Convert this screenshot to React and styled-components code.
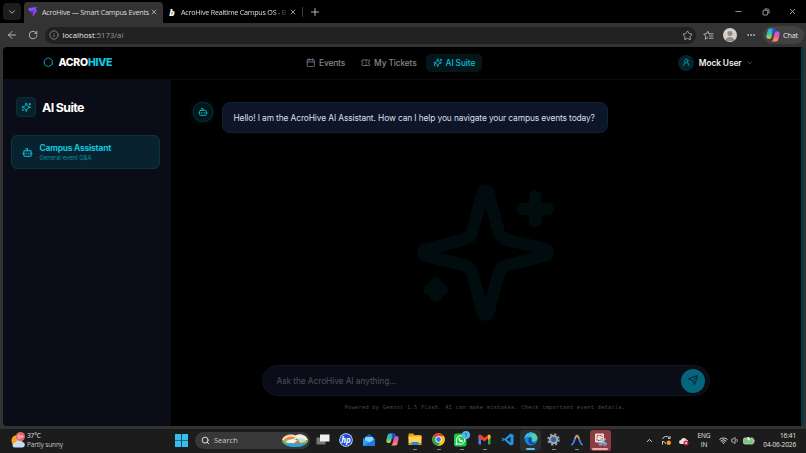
import React from 'react';
import styled, { createGlobalStyle } from 'styled-components';
import {
    ArrowLeft,
    Bot,
    Calendar,
    ChevronDown,
    ChevronUp,
    Ellipsis,
    Hexagon,
    Info,
    Minus,
    Plus,
    RotateCw,
    Search,
    Star,
    Ticket,
    UserRound,
    Volume1,
    Wifi,
    X
} from 'lucide-react';

const GlobalStyle = createGlobalStyle`
    * {
        box-sizing: border-box;
    }

    body {
        margin: 0;
        background: #000;
        overflow: hidden;
        font-family: "Open Sans", "Noto Sans", sans-serif;
    }

    svg {
        display: block;
        flex: none;
    }
`;

/* ---------- drawings ---------- */

const Sparkles = ({ size, stroke = 2 }) => (
    <svg width={size} height={size} viewBox="0 0 24 24" fill="none" stroke="currentColor" strokeWidth={stroke} strokeLinecap="round" strokeLinejoin="round">
        <path d="M9.937 15.5A2 2 0 0 0 8.5 14.063l-6.135-1.582a.5.5 0 0 1 0-.962L8.5 9.936A2 2 0 0 0 9.937 8.5l1.582-6.135a.5.5 0 0 1 .963 0L14.063 8.5A2 2 0 0 0 15.5 9.937l6.135 1.581a.5.5 0 0 1 0 .964L15.5 14.063a2 2 0 0 0-1.437 1.437l-1.582 6.135a.5.5 0 0 1-.963 0zM20 3v4M22 5h-4M4 17v2M5 18H3" />
    </svg>
);

const SendIcon = () => (
    <svg width="10.5" height="10.5" viewBox="0 0 24 24" fill="none" stroke="#032733" strokeWidth="2.2" strokeLinecap="round" strokeLinejoin="round">
        <path d="m22 2-7 20-4-9-9-4ZM22 2 11 13" />
    </svg>
);

const RestoreIcon = () => (
    <svg width="8" height="8" viewBox="0 0 16 16" fill="none" stroke="#c8c8c8" strokeWidth="1.6">
        <rect x="2" y="4.500" width="9.500" height="9.500" rx="2" />
        <path d="M5 2h6a3 3 0 0 1 3 3v6" />
    </svg>
);

const BoltLogo = () => (
    <svg width="10" height="10" viewBox="0 0 20 20">
        <path d="M1 2 18 0l-3 6h4L9 20l1-8H4l3-4H1z" fill="#8d4dff" />
        <path d="m7 8 8-2-5 6H4z" fill="#5f2be0" />
    </svg>
);

const FavoritesIcon = () => (
    <svg width="11" height="11" viewBox="0 0 22 22" fill="none" stroke="#c4c4c4" strokeWidth="1.7" strokeLinecap="round" strokeLinejoin="round">
        <path d="M12 7.500 9.500 2.500 7 7.500 1.500 8.300l4 4-1 6 5-2.800M12 7.500h8M13 12h7M13 16.500h7" />
    </svg>
);

const CopilotLogo = ({ size }) => (
    <svg width={size} height={size} viewBox="0 0 26 26">
        <defs>
            <linearGradient id="coLeft" x1="0" y1="0" x2="0" y2="1">
                <stop offset="0" stopColor="#2aa7ee" />
                <stop offset=".55" stopColor="#39c6a0" />
                <stop offset="1" stopColor="#f5c52d" />
            </linearGradient>
            <linearGradient id="coRight" x1="0" y1="0" x2="0" y2="1">
                <stop offset="0" stopColor="#a35cf0" />
                <stop offset=".55" stopColor="#f0608a" />
                <stop offset="1" stopColor="#ff9a5a" />
            </linearGradient>
        </defs>
        <path d="M8 1h8c-3 1-3 4-4 8l-2 8c-1 3-3 3-5 3-4 0-5-3-4-7l2-8c1-3 2-4 5-4z" fill="url(#coLeft)" />
        <path d="M18 25h-8c3-1 3-4 4-8l2-8c1-3 3-3 5-3 4 0 5 3 4 7l-2 8c-1 3-2 4-5 4z" fill="url(#coRight)" />
        <path d="M12 1h4c2 0 3 2 3.500 5-3 0-4 1-5 4l-1 3-2-4z" fill="#2353cc" />
    </svg>
);

const WeatherIcon = () => (
    <svg width="15" height="17" viewBox="0 0 30 34">
        <circle cx="12" cy="17" r="11" fill="#f6a21b" />
        <path d="M8 31a5 5 0 0 1 0-10 8 8 0 0 1 14-1 5.500 5.500 0 0 1 0 11z" fill="#c9dcf5" />
        <circle cx="19" cy="9" r="9" fill="#e4696a" />
        <text x="19" y="13" fontSize="11" fill="#fff" textAnchor="middle" fontFamily="Open Sans">9+</text>
    </svg>
);

const WindowsLogo = () => (
    <svg width="13" height="13" viewBox="0 0 26 26" fill="#35bdf2">
        <path d="M0 0h12.300v12.300H0zM13.700 0H26v12.300H13.700zM0 13.700h12.300V26H0zM13.700 13.700H26V26H13.700z" />
    </svg>
);

const SearchArt = () => (
    <svg width="28" height="15" viewBox="0 0 56 30">
        <ellipse cx="28" cy="16" rx="26" ry="11" fill="#5fae62" />
        <path d="M2 14C6 3 18 2 27 4l8 5-15 9z" fill="#f3dcae" />
        <path d="M5 15c6-8 14-9 23-6l-9 7z" fill="#e8845a" />
        <path d="M9 19c6-7 14-8 24-4l-8 6z" fill="#eef5e4" />
        <path d="M8 23c10-3 24-3 40-1-6 8-32 8-40 1z" fill="#2ea4d8" />
        <path d="M28 6c8-7 23-3 26 9-5-2-12-1-15 3z" fill="#f5efe2" />
        <path d="M34 12c6-3 12-1 17 5l-13 3z" fill="#ccd9cf" />
        <path d="M30 16c4 0 6 2 8 5l-9 1z" fill="#e4685a" />
    </svg>
);

const TaskViewIcon = () => (
    <svg width="14" height="13" viewBox="0 0 28 26">
        <path d="M1 9h18v14H1z" fill="#777" />
        <path d="M8 3h19v14H8z" fill="#efefef" />
    </svg>
);

const HpIcon = () => (
    <svg width="14" height="14" viewBox="0 0 28 28">
        <circle cx="14" cy="14" r="13.500" fill="#e7efff" />
        <circle cx="14" cy="14" r="12" fill="#1b50d8" />
        <text x="14" y="19" fontSize="16" fontStyle="italic" fontWeight="700" fill="#fff" textAnchor="middle" fontFamily="Open Sans">hp</text>
    </svg>
);

const MailIcon = () => (
    <svg width="14" height="14" viewBox="0 0 28 28">
        <path d="M2 11 14 2l12 9v13a2 2 0 0 1-2 2H4a2 2 0 0 1-2-2z" fill="#1166c8" />
        <path d="M7 8h14l3 7-9 5-10-4z" fill="#8fd4fa" />
        <path d="m2 12 13 7-11 7a2 2 0 0 1-2-2z" fill="#2f9df0" />
        <path d="m26 12-22 14h20a2 2 0 0 0 2-2z" fill="#1b7de0" />
    </svg>
);

const FolderIcon = () => (
    <svg width="14" height="13" viewBox="0 0 28 26">
        <path d="M1 3a2 2 0 0 1 2-2h7l3 3h12a2 2 0 0 1 2 2v6H1z" fill="#e9a317" />
        <path d="M1 7h26v14H1z" fill="#ffd257" />
        <path d="M1 21h26v3H1z" fill="#e9a317" />
        <path d="M7 18h14v6H7z" fill="#2a86dc" />
    </svg>
);

const ChromeIcon = () => (
    <svg width="13" height="13" viewBox="0 0 26 26">
        <circle cx="13" cy="13" r="12.500" fill="#f9c51d" />
        <path d="M13 13 2.200 6.700A12.500 12.500 0 0 1 23.800 6.700z" fill="#e34133" />
        <path d="M13 13 2.200 6.700A12.500 12.500 0 0 0 12.500 25.500l6-9z" fill="#2ba24c" />
        <path d="M13 6.700h10.800A12.500 12.500 0 0 1 12.500 25.500l6-9.300z" fill="#f9c51d" />
        <circle cx="13" cy="13" r="6.300" fill="#fff" />
        <circle cx="13" cy="13" r="4.800" fill="#3b78e7" />
    </svg>
);

const WhatsappIcon = () => (
    <svg width="17" height="17" viewBox="0 0 34 34">
        <rect x="2" y="5" width="25" height="26" rx="5" fill="#17c94b" />
        <path d="m6 27 1.500-5a8.500 8.500 0 1 1 3.500 3.500z" fill="none" stroke="#fff" strokeWidth="2" />
        <path d="M11 14c1-2 2-1 3 1 0 1-1 1 0 2l2 2c1 0 1-1 2-1 3 1 2 3 0 4-4 1-8-4-7-8z" fill="#fff" />
        <circle cx="26" cy="8" r="8" fill="#53b8f0" />
        <text x="26" y="12" fontSize="12" fill="#0b2637" textAnchor="middle" fontFamily="Open Sans">1</text>
    </svg>
);

const GmailIcon = () => (
    <svg width="13" height="11" viewBox="0 0 26 22">
        <path d="M1 4h5v17H3a2 2 0 0 1-2-2z" fill="#4285f4" />
        <path d="M20 4h5v15a2 2 0 0 1-2 2h-3z" fill="#34a853" />
        <path d="M1 4c0-3 3-4 5-2l7 5.500L20 2v7l-7 5.500L1 8z" fill="#ea4335" />
        <path d="M20 2c2-2 5-1 5 2v4l-5 4z" fill="#fbbc04" />
    </svg>
);

const VsCodeIcon = () => (
    <svg width="13" height="13" viewBox="0 0 26 26">
        <path d="M19 1 6.500 12 3 9.500 1 10.500 4 13l-3 2.500 2 1L6.500 14 19 25l6-2.500v-19zM19 7.500v11L11.500 13z" fill="#2196e3" fillRule="evenodd" />
    </svg>
);

const EdgeIcon = () => (
    <svg width="14" height="14" viewBox="0 0 28 28">
        <circle cx="14" cy="14" r="13" fill="#1684d8" />
        <path d="M1 13C2 5 8 1 14 1c8 0 13 6 13 11 0 4-3 7-8 7-3 0-4-1-3-3 2-4-2-7-6-7-5 0-8 2-9 4z" fill="#4fd2a8" />
        <path d="M1 13C2 5 8 1 14 1c3 0 6 1 8 3-6-1-10 1-12 5-5 0-8 2-9 4z" fill="#30b5e6" />
        <path d="M10 12c-4 6 1 13 8 13 3 0 5-1 7-3-5 1-9 0-10-4-1-2 0-3 0-5-1-2-4-3-5-1z" fill="#0b4a9c" />
    </svg>
);

const SettingsIcon = () => (
    <svg width="13" height="13" viewBox="0 0 26 26">
        <circle cx="13" cy="13" r="10.500" fill="none" stroke="#8e9daa" strokeWidth="4" strokeDasharray="4.600 3.650" />
        <circle cx="13" cy="13" r="7.500" fill="#5f6e7b" stroke="#aab6c0" strokeWidth="3" />
        <circle cx="13" cy="13" r="3.500" fill="#1d65b8" />
    </svg>
);

const ArchIcon = () => (
    <svg width="12" height="12" viewBox="0 0 24 24" fill="none" strokeWidth="3.500" strokeLinecap="round">
        <path d="M2 21c5-2 6-18 10-18" stroke="#3b86f5" />
        <path d="M12 3c4 0 5 16 10 18" stroke="#3b86f5" />
        <path d="M8.500 8c1-3 2-5 3.500-5s2.500 2 3.500 5" stroke="#f08e3c" />
    </svg>
);

const SnipIcon = () => (
    <svg width="15" height="15" viewBox="0 0 30 30">
        <rect x="4" y="3" width="18" height="18" rx="2" fill="#f0dada" />
        <path d="M8 7h10v10H8z" fill="none" stroke="#a03b3f" strokeWidth="2" strokeDasharray="3 2" />
        <path d="m15 14 10 10M25 13 15 25" stroke="#a9c3d6" strokeWidth="2.500" />
        <circle cx="24" cy="24" r="3" fill="none" stroke="#6db6e8" strokeWidth="2" />
        <circle cx="15" cy="24" r="3" fill="none" stroke="#6db6e8" strokeWidth="2" />
    </svg>
);

const SyncIcon = () => (
    <svg width="11" height="11" viewBox="0 0 22 22" fill="none" stroke="#cfcfcf" strokeWidth="2">
        <path d="M3 8a8 8 0 0 1 13-3l2 2V2M3 19v-6h3l4 5M18 7h-4" />
        <circle cx="15.500" cy="15.500" r="4.500" fill="#f59b1c" stroke="none" />
    </svg>
);

const CloudIcon = () => (
    <svg width="10" height="10" viewBox="0 0 20 20">
        <path d="M4 16a4 4 0 0 1 0-8 6 6 0 0 1 11-1 4 4 0 0 1 3 5l-3 4z" fill="#e2e2e2" />
        <circle cx="14" cy="14" r="5" fill="#d5243c" />
        <path d="m12 12 4 4M16 12l-4 4" stroke="#fff" strokeWidth="1.300" />
    </svg>
);

const BatteryIcon = () => (
    <svg width="12" height="9" viewBox="0 0 24 18">
        <rect x="1" y="4" width="20" height="12" rx="3" fill="#77c878" stroke="#d8d8d8" strokeWidth="1.500" />
        <path d="M22 7.500v5" stroke="#d8d8d8" strokeWidth="2" />
        <path d="M9 2v6h3l-2 5 5-7h-3V2z" fill="#e8f5e8" />
    </svg>
);

/* ---------- browser frame ---------- */

const Screen = styled.div`
    width: 806px;
    height: 453px;
    display: flex;
    flex-direction: column;
    background: #333;
    overflow: hidden;
    white-space: nowrap;
`;

const TabBar = styled.div`
    height: 23px;
    flex: none;
    display: flex;
    align-items: center;
    background: #000;
    padding: 0 9px 0 3px;
    color: #c8c8c8;
`;

const TabMenu = styled.div`
    width: 18px;
    height: 17px;
    margin-right: 3px;
    border-radius: 4px;
    background: #1d1d1d;
    display: flex;
    align-items: center;
    justify-content: center;
`;

const Tab = styled.div`
    width: ${({ $width }) => $width}px;
    height: 21px;
    margin-top: 2px;
    padding: 0 5px 1px 4px;
    display: flex;
    align-items: center;
    border-radius: 4px 4px 0 0;
    background: ${({ $active }) => ($active ? '#333' : 'transparent')};
    color: #dedede;
`;

const TabTitle = styled.span`
    flex: 1;
    margin: 0 0 0 4px;
    font-size: 7.2px;
    line-height: 12px;
    letter-spacing: -0.24px;
    ${({ $fade }) => $fade && 'mask-image: linear-gradient(90deg, #000 86%, transparent 100%);'}
`;

const Letter = styled.span`
    width: 10px;
    text-align: center;
    font: italic 800 9px "Open Sans", sans-serif;
    color: #fff;
`;

const TabDivider = styled.div`
    width: 1px;
    height: 10px;
    margin: 0 6px 0 0;
    background: #3a3a3a;
`;

const WindowControls = styled.div`
    margin-left: auto;
    display: flex;
    align-items: center;
    gap: 18.500px;
`;

const Toolbar = styled.div`
    height: 24px;
    flex: none;
    display: flex;
    align-items: center;
    padding: 0 2px 0 6px;
    background: #333;
    color: #c4c4c4;
`;

const Reload = styled(RotateCw)`
    margin-left: 9.500px;
`;

const AddressBar = styled.div`
    width: 652px;
    height: 17px;
    margin: 0 7px 0 7px;
    padding: 0 3px 0 4px;
    border-radius: 9px;
    background: #212121;
    display: flex;
    align-items: center;
    justify-content: space-between;
`;

const Url = styled.div`
    display: flex;
    align-items: center;
    gap: 4px;
    font-size: 7.700px;
    color: #9a9a9a;

    b {
        font-weight: 400;
        color: #ececec;
    }
`;

const ProfilePicture = styled.div`
    width: 14px;
    height: 14px;
    margin: 0 9px;
    border-radius: 50%;
    background: #d5d0cb;
    display: flex;
    justify-content: center;
    overflow: hidden;
`;

const ChatButton = styled.div`
    width: 41px;
    height: 18px;
    margin-left: 7px;
    padding-left: 3px;
    border-radius: 9px;
    background: #424242;
    display: flex;
    align-items: center;
    gap: 3px;
    font-size: 7.200px;
    letter-spacing: -0.150px;
    color: #e4e4e4;
`;

/* ---------- page ---------- */

const Viewport = styled.div`
    height: 379px;
    flex: none;
    margin: 0 2px 3px 3px;
    display: flex;
    border-radius: 4px 0 0 4px;
    background: #000;
    overflow: hidden;
    font-family: Inter, sans-serif;
`;

const Page = styled.div`
    flex: 1;
    display: flex;
    flex-direction: column;
`;

const Scrollbar = styled.div`
    width: 3px;
    background: #06363f;
`;

const Header = styled.header`
    height: 33px;
    flex: none;
    display: grid;
    grid-template-columns: 256px 1fr auto;
    align-items: center;
    padding: 0 47.500px 1px 40px;
    border-bottom: 1px solid #0b0c0f;
`;

const Brand = styled.div`
    display: flex;
    align-items: center;
    gap: 5px;
    color: #12b5c9;
    font-size: 10.500px;
    font-weight: 800;
    letter-spacing: -0.280px;

    span {
        color: #fff;
    }

    em {
        font-style: normal;
        color: #10cbe8;
    }
`;

const Nav = styled.nav`
    display: flex;
    align-items: center;
    gap: 2px;
`;

const NavItem = styled.a`
    height: 18px;
    padding: 0 7px;
    display: flex;
    align-items: center;
    gap: 3.500px;
    border-radius: 5px;
    font-size: 8.400px;
    font-weight: 500;
    letter-spacing: -0.140px;
    color: ${({ $active }) => ($active ? '#11bdd5' : '#85888e')};
    background: ${({ $active }) => ($active ? '#03171b' : 'transparent')};
`;

const UserMenu = styled.div`
    display: flex;
    align-items: center;
    color: #f0f0f0;
    font-size: 8.400px;
    font-weight: 600;
    letter-spacing: -0.100px;
    gap: 4.500px;
`;

const UserBadge = styled.div`
    width: 16px;
    height: 16px;
    border-radius: 50%;
    background: #04232a;
    color: #10a5b9;
    display: flex;
    align-items: center;
    justify-content: center;
`;

const Main = styled.div`
    flex: 1;
    display: flex;
`;

const Sidebar = styled.aside`
    width: 168px;
    padding: 17px 11px 0 8px;
    background: #0a0d17;
`;

const SidebarTitle = styled.div`
    display: flex;
    align-items: center;
    gap: 6px;
    margin-bottom: 18px;
    padding-left: 5px;
    font-size: 12.400px;
    font-weight: 700;
    letter-spacing: -0.620px;
    color: #fff;
`;

const SuiteIcon = styled.div`
    width: 20px;
    height: 20px;
    border-radius: 4px;
    border: 1px solid #08303b;
    background: #08222d;
    color: #10b6cc;
    display: flex;
    align-items: center;
    justify-content: center;
`;

const AssistantCard = styled.div`
    height: 34px;
    padding: 0 9.500px;
    border: 1px solid #073541;
    border-radius: 6px;
    background: #08232f;
    display: flex;
    align-items: center;
    gap: 7px;
    color: #10c3de;
`;

const AssistantName = styled.div`
    font-size: 8.400px;
    line-height: 10px;
    font-weight: 700;
    letter-spacing: -0.190px;
`;

const AssistantInfo = styled.div`
    font-size: 5.800px;
    line-height: 9px;
    color: #0a8fa4;
`;

const Chat = styled.main`
    flex: 1;
    display: flex;
    flex-direction: column;
    align-items: center;
`;

const Message = styled.div`
    align-self: flex-start;
    display: flex;
    align-items: flex-start;
    gap: 9px;
    padding: 22px 0 0 22px;
`;

const BotAvatar = styled.div`
    width: 19.500px;
    height: 19.500px;
    border-radius: 50%;
    border: 1px solid #05343c;
    background: #02161a;
    box-shadow: 0 0 4px #03262c;
    color: #0fb1c6;
    display: flex;
    align-items: center;
    justify-content: center;
`;

const Bubble = styled.div`
    width: 386px;
    height: 31px;
    padding-left: 11px;
    display: flex;
    align-items: center;
    border: 1px solid #0b2533;
    border-radius: 8px;
    background: #0d1629;
    color: #dcdfe5;
    font-size: 8.400px;
    letter-spacing: -0.112px;
`;

const Watermark = styled.div`
    margin: 45px 2px 0 0;
    color: #010c0f;
`;

const Prompt = styled.div`
    width: 448px;
    height: 31px;
    margin-top: 38px;
    padding: 0 4px 0 13.500px;
    display: flex;
    align-items: center;
    justify-content: space-between;
    border: 1px solid #11151e;
    border-radius: 16px;
    background: #0a0d17;
    color: #4a505e;
    font-size: 8.400px;
    letter-spacing: -0.090px;
`;

const SendButton = styled.div`
    width: 24px;
    height: 24px;
    border-radius: 50%;
    background: #05657b;
    display: flex;
    align-items: center;
    justify-content: center;
`;

const Footnote = styled.div`
    margin: 7px 2px 0 0;
    font-family: "DejaVu Sans Mono", monospace;
    font-size: 5.400px;
    letter-spacing: 0.220px;
    line-height: 9px;
    color: #464c57;
`;

/* ---------- taskbar ---------- */

const Taskbar = styled.div`
    flex: 1;
    display: flex;
    align-items: center;
    padding: 0 10px 1px 11px;
    background: #1c1c1c;
    color: #e4e4e4;
    font-size: 6.500px;
    line-height: 8.500px;
`;

const Weather = styled.div`
    width: 164px;
    display: flex;
    align-items: center;
    gap: 1px;
    letter-spacing: -0.120px;

    div div {
        color: #c4c4c4;
    }
`;

const SearchBox = styled.div`
    width: 115px;
    height: 17px;
    margin: 0 1.500px 0 7px;
    padding: 0 1px 0 6px;
    display: flex;
    align-items: center;
    gap: 4px;
    border-radius: 9px;
    background: #383838;
    font-size: 7.500px;

    span {
        flex: 1;
        color: #c9c9c9;
    }
`;

const AppSlot = styled.div`
    width: 23.100px;
    height: 23px;
    display: grid;
    grid-template-rows: 18px 2px;
    align-content: center;
    justify-items: center;
    align-items: center;
`;

const AppTile = styled.div`
    width: 21px;
    height: 21px;
    grid-row: span 2;
    display: grid;
    grid-template-rows: 18px 2px;
    justify-items: center;
    align-items: center;
    border-radius: 3px;
    background: ${({ $color }) => $color};
`;

const Running = styled.div`
    width: ${({ $width = 4 }) => $width}px;
    height: 1.500px;
    border-radius: 1px;
    background: ${({ $color = '#8d8d8d' }) => $color};
`;

const Tray = styled.div`
    margin-left: auto;
    display: flex;
    align-items: center;
`;

const Language = styled.div`
    width: 20px;
    margin: 0 5px 0 5px;
    text-align: center;
    letter-spacing: -0.150px;
`;

const TrayGroup = styled.div`
    display: flex;
    align-items: center;
    gap: ${({ $gap }) => $gap}px;
`;

const Clock = styled.div`
    width: 41px;
    text-align: right;
    letter-spacing: -0.120px;
`;

const taskbarApps = [
    { name: 'task-view', icon: <TaskViewIcon /> },
    { name: 'hp', icon: <HpIcon /> },
    { name: 'mail', icon: <MailIcon /> },
    { name: 'copilot', icon: <CopilotLogo size={13} /> },
    { name: 'files', icon: <FolderIcon />, running: true },
    { name: 'chrome', icon: <ChromeIcon />, running: true },
    { name: 'whatsapp', icon: <WhatsappIcon />, running: true },
    { name: 'gmail', icon: <GmailIcon />, running: true },
    { name: 'vscode', icon: <VsCodeIcon /> },
    { name: 'edge', icon: <EdgeIcon />, tile: '#2b2d2f', bar: '#5cb9ea', barWidth: 9 },
    { name: 'settings', icon: <SettingsIcon />, running: true },
    { name: 'arch', icon: <ArchIcon />, running: true },
    { name: 'snip', icon: <SnipIcon />, tile: '#8b3d43', bar: '#f3a4a8', barWidth: 16 }
];

const Browser = () => (
    <>
        <TabBar>
            <TabMenu><ChevronDown size={10} strokeWidth={2} /></TabMenu>
            <Tab $active $width={139}>
                <BoltLogo />
                <TabTitle>AcroHive — Smart Campus Events</TabTitle>
                <X size={8} />
            </Tab>
            <Tab $width={139}>
                <Letter>b</Letter>
                <TabTitle $fade>AcroHive Realtime Campus OS - B</TabTitle>
                <X size={8} />
            </Tab>
            <TabDivider />
            <Plus size={12} strokeWidth={1.8} />
            <WindowControls>
                <Minus size={9} strokeWidth={2} />
                <RestoreIcon />
                <X size={9} strokeWidth={2} />
            </WindowControls>
        </TabBar>
        <Toolbar>
            <ArrowLeft size={12} strokeWidth={1.8} />
            <Reload size={10} strokeWidth={2} />
            <AddressBar>
                <Url>
                    <Info size={10} strokeWidth={1.8} />
                    <div><b>localhost</b>:5173/ai</div>
                </Url>
                <Star size={11} strokeWidth={1.7} />
            </AddressBar>
            <FavoritesIcon />
            <ProfilePicture>
                <svg width="14" height="14" viewBox="0 0 28 28" fill="#918b87">
                    <circle cx="14" cy="11" r="5" />
                    <path d="M5 26c0-11 18-11 18 0z" />
                </svg>
            </ProfilePicture>
            <Ellipsis size={10} strokeWidth={2.4} />
            <ChatButton>
                <CopilotLogo size={14} />
                Chat
            </ChatButton>
        </Toolbar>
    </>
);

const AppHeader = () => (
    <Header>
        <Brand>
            <Hexagon size={10.5} strokeWidth={2} />
            <div><span>ACRO</span><em>HIVE</em></div>
        </Brand>
        <Nav>
            <NavItem><Calendar size={9.5} />Events</NavItem>
            <NavItem><Ticket size={9.5} />My Tickets</NavItem>
            <NavItem $active><Sparkles size={9.5} stroke={2.2} />AI Suite</NavItem>
        </Nav>
        <UserMenu>
            <UserBadge><UserRound size={8.5} strokeWidth={2.3} /></UserBadge>
            Mock User
            <ChevronDown size={7.5} color="#85878b" />
        </UserMenu>
    </Header>
);

const AiSuite = () => (
    <Main>
        <Sidebar>
            <SidebarTitle>
                <SuiteIcon><Sparkles size={10.5} stroke={2.2} /></SuiteIcon>
                AI Suite
            </SidebarTitle>
            <AssistantCard>
                <Bot size={11} strokeWidth={2.3} />
                <div>
                    <AssistantName>Campus Assistant</AssistantName>
                    <AssistantInfo>General event Q&amp;A</AssistantInfo>
                </div>
            </AssistantCard>
        </Sidebar>
        <Chat>
            <Message>
                <BotAvatar><Bot size={10} strokeWidth={2.3} /></BotAvatar>
                <Bubble>Hello! I am the AcroHive AI Assistant. How can I help you navigate your campus events today?</Bubble>
            </Message>
            <Watermark><Sparkles size={149} /></Watermark>
            <Prompt>
                Ask the AcroHive AI anything...
                <SendButton><SendIcon /></SendButton>
            </Prompt>
            <Footnote>Powered by Gemini 1.5 Flash. AI can make mistakes. Check important event details.</Footnote>
        </Chat>
    </Main>
);

const WindowsTaskbar = () => (
    <Taskbar>
        <Weather>
            <WeatherIcon />
            <div>
                37°C
                <div>Partly sunny</div>
            </div>
        </Weather>
        <WindowsLogo />
        <SearchBox>
            <Search size={9} strokeWidth={2.5} />
            <span>Search</span>
            <SearchArt />
        </SearchBox>
        {taskbarApps.map(({ name, icon, running, tile, bar, barWidth }) => (
            <AppSlot key={name}>
                {tile ? (
                    <AppTile $color={tile}>
                        {icon}
                        <Running $width={barWidth} $color={bar} />
                    </AppTile>
                ) : (
                    <>
                        {icon}
                        {running && <Running />}
                    </>
                )}
            </AppSlot>
        ))}
        <Tray>
            <TrayGroup $gap={7}>
                <ChevronUp size={9} strokeWidth={2.5} />
                <SyncIcon />
                <CloudIcon />
            </TrayGroup>
            <Language>ENG<br />IN</Language>
            <TrayGroup $gap={3}>
                <Wifi size={9} strokeWidth={2.5} />
                <Volume1 size={9} />
                <BatteryIcon />
            </TrayGroup>
            <Clock>16:41<br />04-06-2026</Clock>
        </Tray>
    </Taskbar>
);

const App = () => (
    <>
        <GlobalStyle />
        <Screen>
            <Browser />
            <Viewport>
                <Page>
                    <AppHeader />
                    <AiSuite />
                </Page>
                <Scrollbar />
            </Viewport>
            <WindowsTaskbar />
        </Screen>
    </>
);

export default App;
